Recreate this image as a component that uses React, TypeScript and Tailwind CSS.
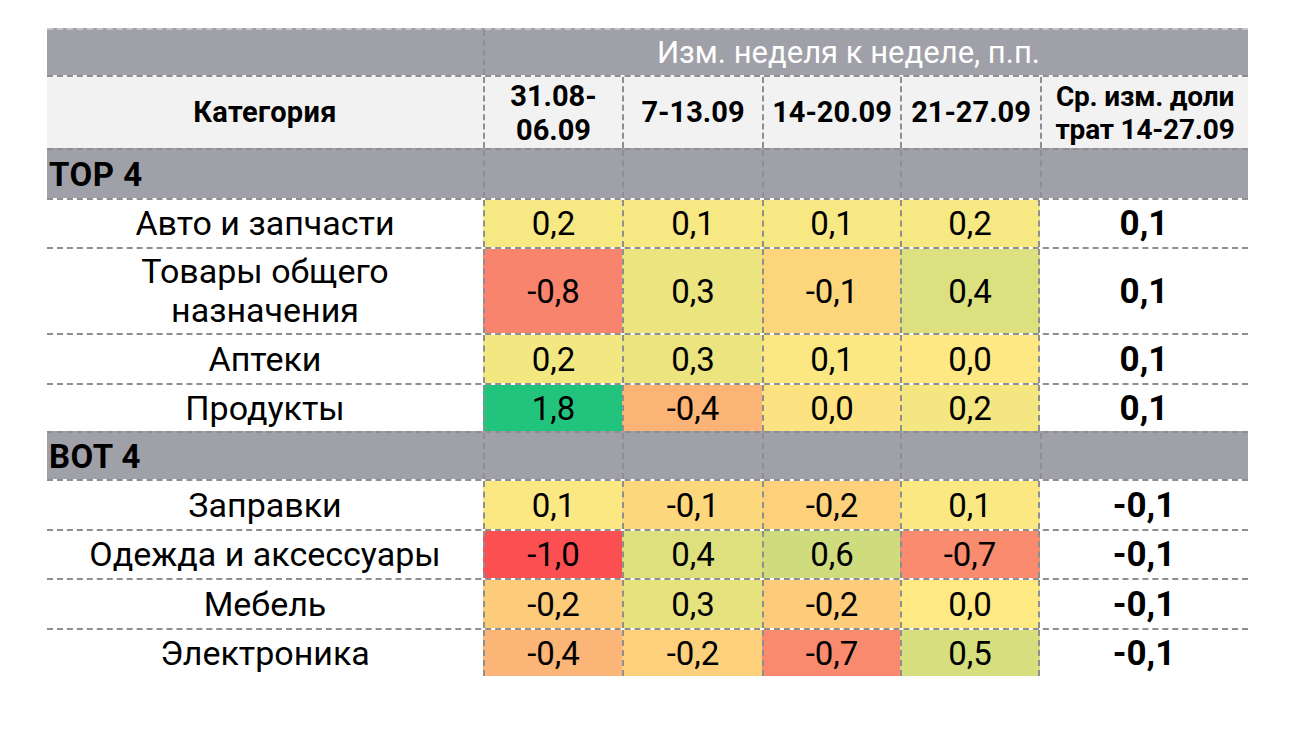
const cols = "grid grid-cols-[436px_139px_140px_138px_140px_208px]";
const line = "border-dashed border-[#8f8f8f]";

type Row = { name: React.ReactNode; h: string; vals: [string, string][]; avg: string };

const top: Row[] = [
  {
    name: "Авто и запчасти",
    h: "h-[49px]",
    vals: [["0,2", "bg-[#f6e883]"], ["0,1", "bg-[#f8e883]"], ["0,1", "bg-[#f8e883]"], ["0,2", "bg-[#f6e883]"]],
    avg: "0,1",
  },
  {
    name: (
      <>
        Товары общего
        <br />
        назначения
      </>
    ),
    h: "h-[86px]",
    vals: [["-0,8", "bg-[#f9846d]"], ["0,3", "bg-[#ebe47f]"], ["-0,1", "bg-[#fdd67c]"], ["0,4", "bg-[#dde07e]"]],
    avg: "0,1",
  },
  {
    name: "Аптеки",
    h: "h-[50px]",
    vals: [["0,2", "bg-[#f3e782]"], ["0,3", "bg-[#ebe47f]"], ["0,1", "bg-[#fbe882]"], ["0,0", "bg-[#fee883]"]],
    avg: "0,1",
  },
  {
    name: "Продукты",
    h: "h-[48px]",
    vals: [["1,8", "bg-[#22c47d]"], ["-0,4", "bg-[#fbb376]"], ["0,0", "bg-[#fde281]"], ["0,2", "bg-[#f4e782]"]],
    avg: "0,1",
  },
];

const bot: Row[] = [
  {
    name: "Заправки",
    h: "h-[50px]",
    vals: [["0,1", "bg-[#fbe882]"], ["-0,1", "bg-[#fdd77c]"], ["-0,2", "bg-[#fdd07b]"], ["0,1", "bg-[#fbe882]"]],
    avg: "-0,1",
  },
  {
    name: "Одежда и аксессуары",
    h: "h-[49px]",
    vals: [["-1,0", "bg-[#fb4f51]"], ["0,4", "bg-[#dee07e]"], ["0,6", "bg-[#cfdc7e]"], ["-0,7", "bg-[#f98b6e]"]],
    avg: "-0,1",
  },
  {
    name: "Мебель",
    h: "h-[50px]",
    vals: [["-0,2", "bg-[#fdcc7b]"], ["0,3", "bg-[#e6e37f]"], ["-0,2", "bg-[#fdcc7b]"], ["0,0", "bg-[#fee983]"]],
    avg: "-0,1",
  },
  {
    name: "Электроника",
    h: "h-[48px]",
    vals: [["-0,4", "bg-[#fbb576]"], ["-0,2", "bg-[#fdd07b]"], ["-0,7", "bg-[#f98a6d]"], ["0,5", "bg-[#d7de7d]"]],
    avg: "-0,1",
  },
];

function Section({ label, h }: { label: string; h: string }) {
  return (
    <div className={`${cols} ${h} bg-[#9fa0a8] border-t-2 ${line}`}>
      <div className="flex items-center pl-[2px] text-[33px] leading-none tracking-[0.5px] font-bold text-black">
        {label}
      </div>
      <div className={`border-l-2 ${line}`} />
      <div className={`border-l-2 ${line}`} />
      <div className={`border-l-2 ${line}`} />
      <div className={`border-l-2 ${line}`} />
      <div className={`border-l-2 ${line}`} />
    </div>
  );
}

function DataRow({ row }: { row: Row }) {
  return (
    <div className={`${cols} ${row.h} border-t-2 ${line}`}>
      <div className="flex items-center justify-center text-center text-[34px] leading-[39px] text-black">
        {row.name}
      </div>
      {row.vals.map(([v, bg], i) => (
        <div
          key={i}
          className={`flex items-center justify-center text-[33px] leading-none text-black border-l-2 ${line} ${bg} ${
            i === 3 ? "border-r-2" : ""
          }`}
        >
          {v}
        </div>
      ))}
      <div className="flex items-center justify-center text-[35px] leading-none font-bold text-black">{row.avg}</div>
    </div>
  );
}

export default function App() {
  return (
    <div className="min-h-screen bg-white pl-[47px] pt-[28px] font-['Roboto',sans-serif]">
      <div className="w-[1201px]">
        {/* Title row */}
        <div className="grid grid-cols-[436px_765px] h-[47px] bg-[#9fa0a8] border-t-2 border-dashed border-[#c4c5ca]">
          <div />
          <div
            className={`flex items-center justify-center pr-[36px] text-[31px] leading-none text-white border-l-2 ${line}`}
          >
            Изм. неделя к неделе, п.п.
          </div>
        </div>

        {/* Column headers */}
        <div className={`${cols} h-[73px] bg-[#f2f2f2] border-t-2 ${line} font-bold text-black`}>
          <div className="flex items-center justify-center text-[29px] leading-none tracking-[0.3px]">Категория</div>
          <div className={`flex items-center justify-center text-center text-[29px] leading-[34px] border-l-2 ${line}`}>
            31.08-
            <br />
            06.09
          </div>
          <div className={`flex items-center justify-center text-[29px] leading-none border-l-2 ${line}`}>7-13.09</div>
          <div className={`flex items-center justify-center text-[29px] leading-none border-l-2 ${line}`}>14-20.09</div>
          <div className={`flex items-center justify-center text-[29px] leading-none border-l-2 ${line}`}>21-27.09</div>
          <div
            className={`flex items-center justify-center text-center text-[28px] leading-[33px] tracking-[-0.2px] whitespace-nowrap border-l-2 ${line}`}
          >
            Ср. изм. доли
            <br />
            трат 14-27.09
          </div>
        </div>

        <Section label="TOP 4" h="h-[50px]" />
        {top.map((r, i) => (
          <DataRow key={i} row={r} />
        ))}
        <Section label="BOT 4" h="h-[48px]" />
        {bot.map((r, i) => (
          <DataRow key={i} row={r} />
        ))}
      </div>
    </div>
  );
}
